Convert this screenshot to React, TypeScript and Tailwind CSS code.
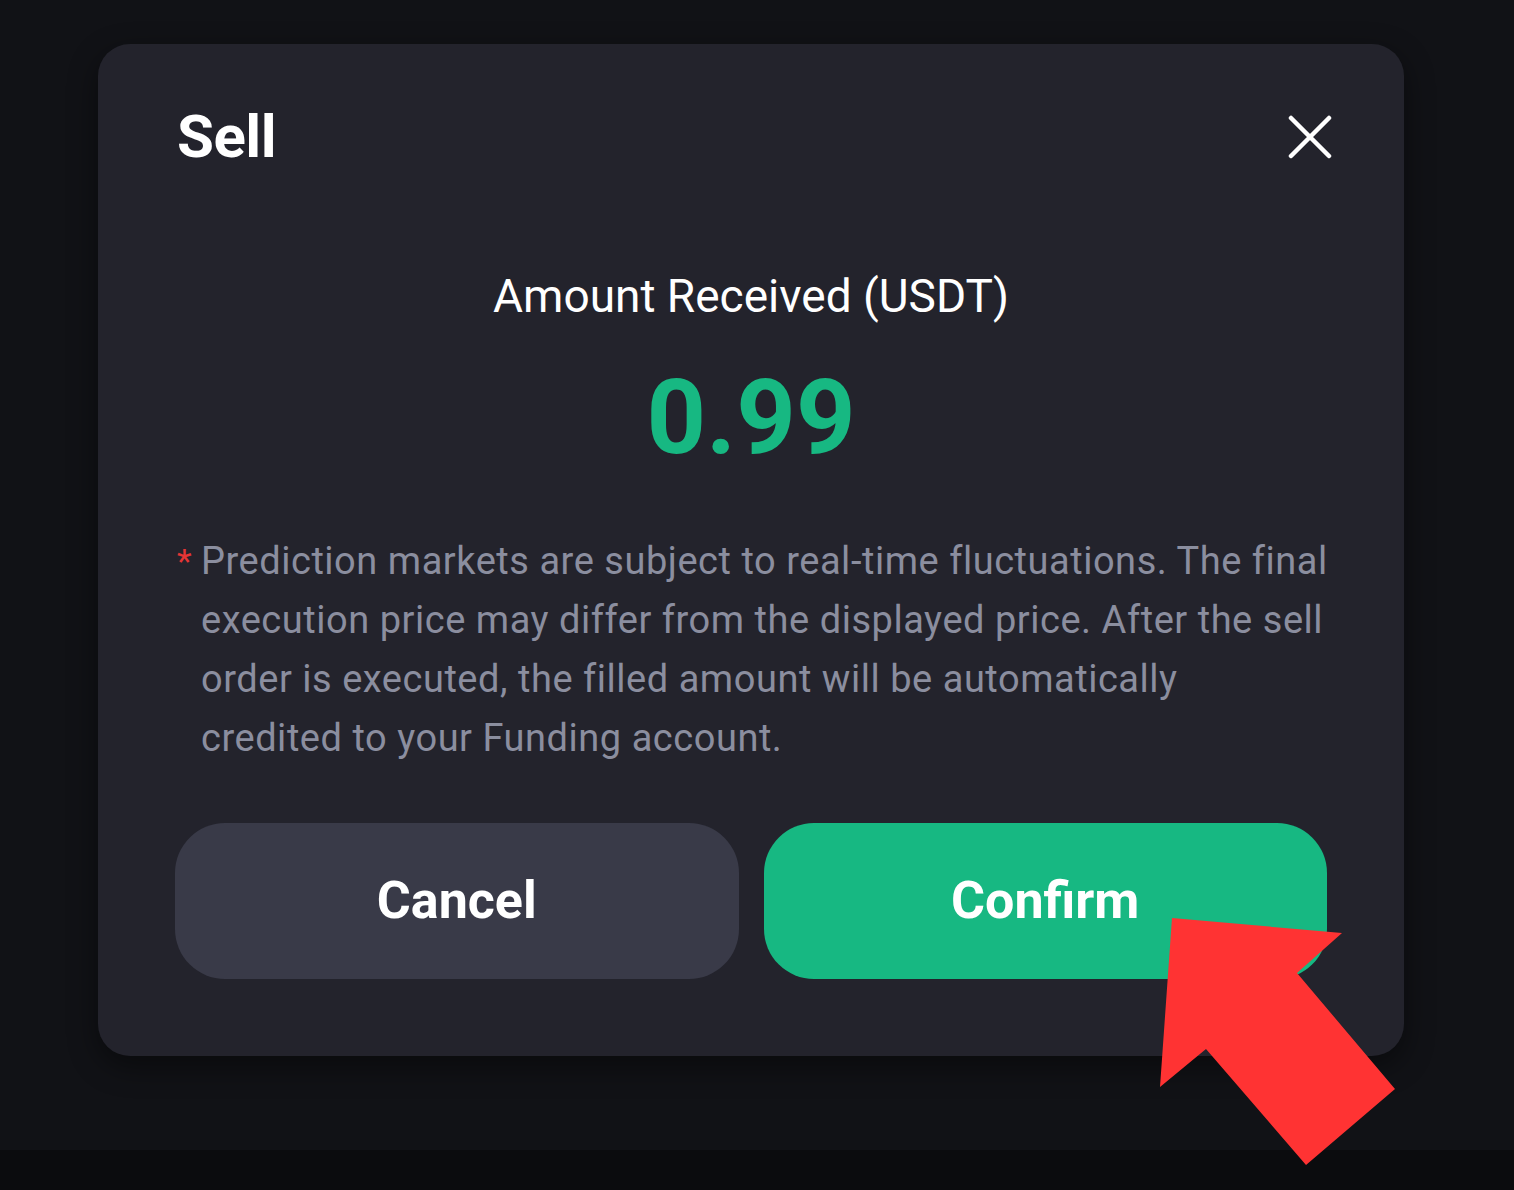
export default function App() {
  return (
    <div className="relative w-[1514px] h-[1190px] overflow-hidden" style={{ fontFamily: 'Roboto, "Noto Sans", sans-serif' }}>
      <div className="h-[1150px] bg-[#111216] pt-[44px] pl-[98px]">
        <div className="w-[1306px] h-[1012px] rounded-[32px] bg-[#23232c] shadow-[0_10px_30px_rgba(0,0,0,0.45)] px-[77px] pt-[63px] pb-[77px] flex flex-col">
          <div className="flex items-center justify-between">
            <h1 className="pl-[2px] text-[60px] leading-none font-bold text-white tracking-[-0.5px]">Sell</h1>
            <svg width="44" height="44" viewBox="0 0 44 44" className="mr-[-5px]">
              <path d="M3 3L41 41M41 3L3 41" stroke="#fff" strokeWidth="4.5" strokeLinecap="round" />
            </svg>
          </div>
          <div className="mt-[106px] text-center text-[46px] leading-none text-white">Amount Received (USDT)</div>
          <div className="mt-[47px] text-center text-[104px] leading-none font-bold text-[#17b882]">0.99</div>
          <div className="mt-[62px] flex pl-[2px] mr-[-8px]">
            <span className="w-[24px] shrink-0 text-[34px] leading-[59px] text-[#e53535]">*</span>
            <p className="text-[38px] leading-[59px] tracking-[0.53px] text-[#8b8e9f]">
              Prediction markets are subject to real-time fluctuations. The final execution price may differ from the displayed price. After the sell order is executed, the filled amount will be automatically
              <br />
              credited to your Funding account.
            </p>
          </div>
          <div className="mt-auto flex gap-[25px]">
            <button className="flex-1 h-[156px] rounded-[50px] bg-[#393a48] text-white text-[52px] font-bold">Cancel</button>
            <button className="flex-1 h-[156px] rounded-[50px] bg-[#17b882] text-white text-[52px] font-bold">Confirm</button>
          </div>
        </div>
      </div>
      <div className="h-[40px] bg-[#0b0c0e]" />
      <svg className="absolute left-0 top-0 pointer-events-none" width="1514" height="1190">
        <polygon points="1172,918 1342,933 1297,973 1395,1089 1306,1165 1206,1049 1160,1087" fill="#ff3333" />
      </svg>
    </div>
  )
}
